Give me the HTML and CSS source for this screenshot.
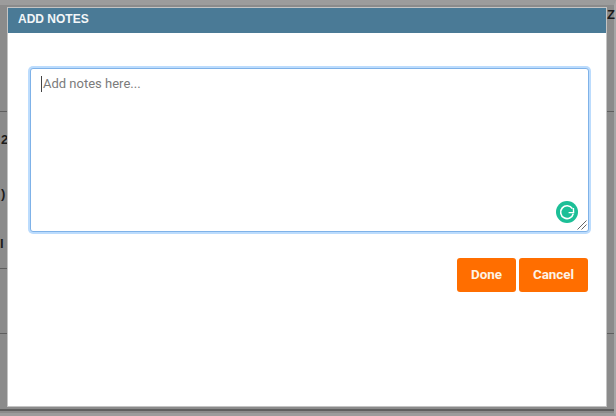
FILE: index.html
```html
<!DOCTYPE html>
<html lang="en">
<head>
<meta charset="utf-8">
<title>Add notes</title>
<link rel="stylesheet" href="styles.css">
</head>
<body>
<div class="backdrop">
  <span class="bg-text bg-a">2</span>
  <span class="bg-text bg-b">)</span>
  <span class="bg-text bg-c">I</span>
  <span class="bg-text bg-d">Z</span>
  <i class="bg-line bg-l1"></i>
  <i class="bg-line bg-l2"></i>
  <i class="bg-line bg-l3"></i>
  <i class="bg-line bg-r1"></i>
  <i class="bg-line bg-r2"></i>
  <i class="bg-line bg-r3"></i>
</div>
<section class="modal">
  <header class="modal-title">ADD NOTES</header>
  <div class="modal-body">
    <div class="notes">
      <div class="notes-text"><span class="caret"></span>Add notes here...</div>
      <svg class="grammarly" width="24" height="24" viewBox="0 0 24 24" aria-hidden="true">
        <circle cx="12" cy="12" r="11" fill="#1cbf97"/>
        <path d="M17.4 8.6A6.4 6.4 0 1 0 18.3 13.6" fill="none" stroke="#fff" stroke-width="1.6"/>
        <path d="M13.6 12.6h5l-.2 -4.6" fill="none" stroke="#fff" stroke-width="1.4"/>
      </svg>
      <svg class="grip" width="10" height="10" viewBox="0 0 10 10" aria-hidden="true">
        <path d="M9.5 .5L.5 9.5M9.5 4.5L4.5 9.5" stroke="#666" stroke-width="1" fill="none"/>
      </svg>
    </div>
    <div class="actions">
      <button class="btn btn-done">Done</button>
      <button class="btn btn-cancel">Cancel</button>
    </div>
  </div>
</section>
</body>
</html>
```
FILE: styles.css
```css
html, body {
  margin: 0;
  height: 100%;
}
body {
  width: 616px;
  height: 416px;
  position: relative;
  overflow: hidden;
  background: #8b8b8b;
  font-family: "Liberation Sans", sans-serif;
  padding: 8px 10px 10px 8px;
  box-sizing: border-box;
}
.backdrop {
  position: absolute;
  inset: 0;
  border-top: 5px solid #9c9c9c;
  border-right: 2px solid #a6a6a6;
  border-bottom: 3px solid #9c9c9c;
  box-sizing: border-box;
}
.bg-text {
  position: absolute;
  font: bold 13px "Liberation Sans", sans-serif;
  color: #1c1c1c;
}
.bg-a { left: 1px; top: 127px; }
.bg-b { left: 1px; top: 181px; }
.bg-c { left: 0; top: 231px; }
.bg-d { left: 607px; top: 2px; }
.bg-line {
  position: absolute;
  height: 1px;
  background: #5f5f5f;
}
.bg-l1 { left: 0; width: 8px; top: 106px; }
.bg-l2 { left: 0; width: 8px; top: 263px; }
.bg-l3 { left: 0; width: 8px; top: 328px; }
.bg-r1 { left: 606px; width: 8px; top: 106px; }
.bg-r2 { left: 606px; width: 8px; top: 328px; }
.bg-r3 { left: 0; width: 614px; top: 404px; height: 2px; }
.modal {
  position: relative;
  width: 598px;
  height: 398px;
  background: #fff;
  box-shadow: 0 0 0 1px #c4c4c4;
}
.modal-title {
  height: 25px;
  background: #4a7a96;
  color: #f2f6f8;
  font-size: 12px;
  font-weight: 700;
  line-height: 23px;
  padding-left: 10px;
}
.modal-body {
  padding: 35px 17px 0 22px;
}
.notes {
  position: relative;
  height: 162px;
  border: 1px solid #7fb2e8;
  border-radius: 3px;
  box-shadow: 0 0 0 2px #bcdcfd;
  background: #fff;
}
.notes-text {
  padding: 7px 0 0 10px;
  font-family: "Roboto", "Liberation Sans", sans-serif;
  font-size: 13px;
  line-height: 16px;
  color: #7b7b7b;
  display: flex;
}
.caret {
  width: 1px;
  height: 16px;
  background: #444;
  margin-right: 1px;
}
.grammarly {
  position: absolute;
  right: 9px;
  bottom: 7px;
}
.grip {
  position: absolute;
  right: 1px;
  bottom: 1px;
}
.actions {
  display: flex;
  justify-content: flex-end;
  gap: 3px;
  margin-top: 26px;
  padding-right: 1px;
}
.btn {
  height: 34px;
  border: 0;
  border-radius: 3px;
  background: #ff6e00;
  color: #fdf3e6;
  font-family: "Roboto", "Liberation Sans", sans-serif;
  font-size: 13.4px;
  font-weight: 700;
  padding: 0 0 2px;
}
.btn-done { width: 59px; }
.btn-cancel { width: 69px; }
```
